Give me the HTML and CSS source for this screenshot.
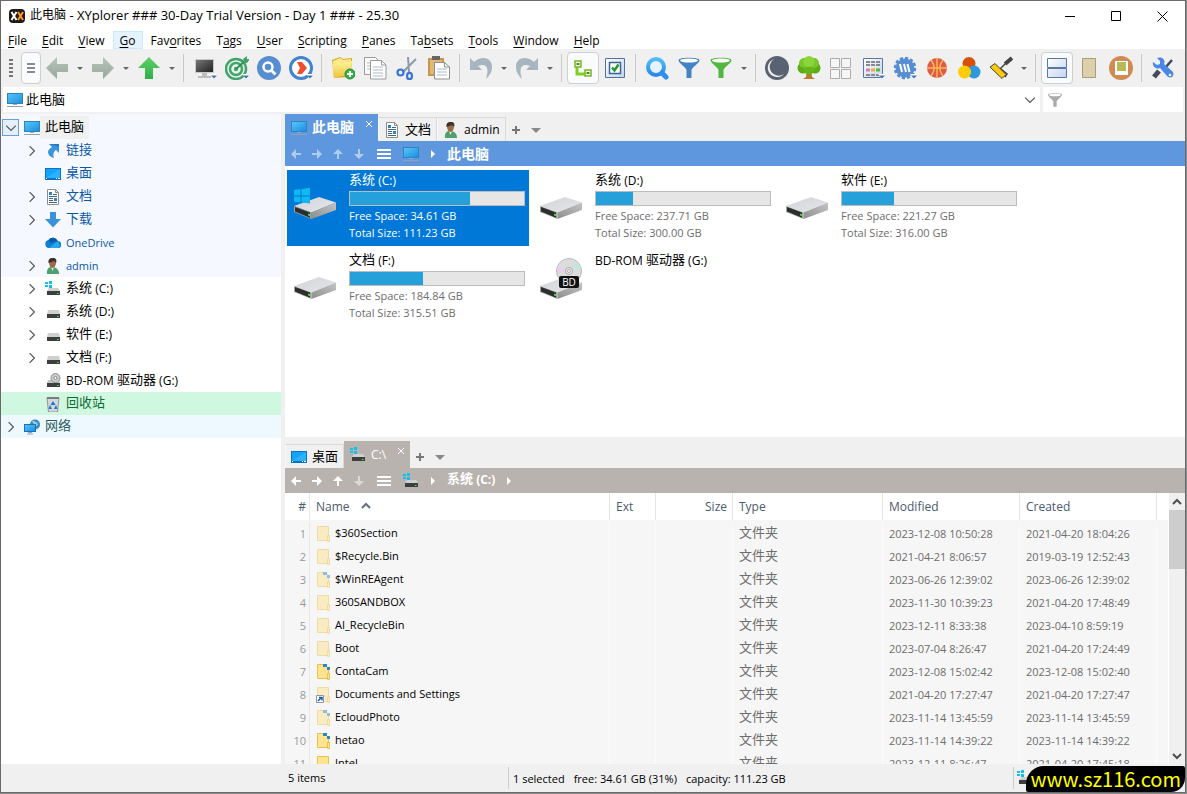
FILE: index.html
```html
<!DOCTYPE html>
<html lang="en">
<head>
    <meta charset="UTF-8">
    <meta name="viewport" content="width=device-width, initial-scale=1.0">
    <title>XYplorer</title>
    <link rel="stylesheet" href="styles.css">
</head>
<body>
    <!-- icon sprite -->
    <svg class="sprite" width="0" height="0" aria-hidden="true">
        <defs>
            <linearGradient id="gScreen" x1="0" y1="0" x2="1" y2="1"><stop offset="0" stop-color="#56c5f9"/><stop offset="1" stop-color="#1e8fe0"/></linearGradient>
            <linearGradient id="gGrayArrow" x1="0" y1="0" x2="0" y2="1"><stop offset="0" stop-color="#b9c4bb"/><stop offset="1" stop-color="#98a89c"/></linearGradient>
            <linearGradient id="gGreen" x1="0" y1="0" x2="0" y2="1"><stop offset="0" stop-color="#5fd06a"/><stop offset="1" stop-color="#2fae48"/></linearGradient>
            <linearGradient id="gDark" x1="0" y1="0" x2="1" y2="1"><stop offset="0" stop-color="#777"/><stop offset="1" stop-color="#222"/></linearGradient>
            <linearGradient id="gFolder" x1="0" y1="0" x2="0" y2="1"><stop offset="0" stop-color="#fff3a0"/><stop offset="1" stop-color="#eec43a"/></linearGradient>
            <linearGradient id="gPane" x1="0" y1="0" x2="1" y2="1"><stop offset="0" stop-color="#fff"/><stop offset="1" stop-color="#c3d3ef"/></linearGradient>
            <linearGradient id="gDriveTop" x1="0" y1="0" x2="1" y2="1"><stop offset="0" stop-color="#d2d3d6"/><stop offset="1" stop-color="#e6e7ea"/></linearGradient>
            <linearGradient id="gDriveSide" x1="0" y1="1" x2="1" y2="0"><stop offset="0" stop-color="#8e8e8e"/><stop offset="1" stop-color="#c4c4c6"/></linearGradient>
            <linearGradient id="gLens" x1="0" y1="0" x2="0" y2="1"><stop offset="0" stop-color="#51bdf8"/><stop offset="1" stop-color="#2b87ec"/></linearGradient>
        </defs>

        <symbol id="i-pc" viewBox="0 0 16 16">
            <path d="M0 1h16v11H0z" fill="#2c83bf"/><path d="M1 2h14v9H1z" fill="url(#gScreen)"/>
            <path d="M6 12h4v1H6z" fill="#9ab"/><path d="M0 14h16v1H0z" fill="#8fa3b5"/>
        </symbol>
        <symbol id="i-desktop" viewBox="0 0 16 16">
            <path d="M0 2h16v12H0z" fill="#0b72c4"/><path d="M1 3h14v9H1z" fill="#14a3fb"/><path d="M1 12l14-9v9z" fill="#2eb1ff"/>
            <path d="M1 12h1v1H1zM11 12h1v1h-1zM13 12h2v1h-2z" fill="#fff"/>
        </symbol>
        <symbol id="i-link" viewBox="0 0 16 16">
            <path d="M4 1h10v9l-3-3C8 9 8 12 9 15c-4-1-6-3-6-6 0-2 2-4 4-5z" fill="#3a95dd"/><path d="M4 1h10v3z" fill="#2579c6"/>
        </symbol>
        <symbol id="i-doc" viewBox="0 0 16 16">
            <path d="M2.500.5h8l3 3v12h-11z" fill="#fff" stroke="#8c8c8c"/><path d="M10.500.5v3h3" fill="none" stroke="#8c8c8c"/>
            <path d="M4 3h3v3H4zM9 9h3v3H9z" fill="#2f84c6"/><path d="M8 5.500h4M4 7.500h8M4 9.500h4M4 11.500h4M4 13.500h8" stroke="#48627b"/>
        </symbol>
        <symbol id="i-down" viewBox="0 0 16 16">
            <path d="M5 0h6v7h5l-8 8.500L0 7h5z" fill="#3a92dc"/>
        </symbol>
        <symbol id="i-cloud" viewBox="0 0 16 16">
            <path d="M4 13a4 4 0 0 1-.5-7.900A5.200 5.200 0 0 1 12.700 6a3.500 3.500 0 0 1 .3 7z" fill="#0f7fd6"/>
            <path d="M3.500 5.100A5.200 5.200 0 0 1 12.700 6L6 8z" fill="#0a5ca8"/><path d="M4 13l8-6.500a3.500 3.500 0 0 1 1 6.500z" fill="#28a8ea"/>
        </symbol>
        <symbol id="i-user" viewBox="0 0 16 16">
            <path d="M2 16c-.5-4 1-6.500 3.500-7h3c3.500 1 5.500 3 5.500 7z" fill="#4fa06f"/><path d="M6 9l1.500 4L9 9z" fill="#eee"/>
            <path d="M4 4c0-5 7-5 7 0 0 3-1.500 6-3.500 6S4 7 4 4z" fill="#9c6b48"/><path d="M3.500 5C3 0 6 0 8 0c3 0 4 2 3 5L9.500 3z" fill="#3b332c"/>
        </symbol>
        <symbol id="i-drive" viewBox="0 0 16 16">
            <path d="M3 6h11l1 4H2z" fill="#d0d0d0"/><path d="M2 10h13v4H2z" fill="#3c3f3e"/><path d="M12 12h1.500v1H12z" fill="#37ff4c"/>
        </symbol>
        <symbol id="i-cdrive" viewBox="0 0 16 16">
            <path d="M4 7h9l2 3H2z" fill="#d0d0d0"/><path d="M2 10h13v4H2z" fill="#3c3f3e"/><path d="M12 12h1.500v1H12z" fill="#37ff4c"/>
            <path d="M0 1h3v2H0zM4 0h3v3H4zM0 4h3v2H0zM4 4h3v3H4z" fill="#12c0f0"/>
        </symbol>
        <symbol id="i-bd" viewBox="0 0 16 16">
            <path d="M3 7h11l1 3H2z" fill="#c4c4c4"/><path d="M2 10h13v4H2z" fill="#3c3f3e"/><path d="M12 12h1.500v1H12z" fill="#37ff4c"/>
            <circle cx="10.500" cy="5" r="4.500" fill="#c9cbcd" stroke="#8d8f91"/><circle cx="10.500" cy="5" r="1.500" fill="#fff" stroke="#888"/>
        </symbol>
        <symbol id="i-bin" viewBox="0 0 16 16">
            <path d="M2 2l12-.5L12.500 16h-9z" fill="#d4d7da" stroke="#91979c"/><path d="M2 1h12v2H2z" fill="#777d83"/>
            <path d="M8 5l2.500 4h-5zM5 9l-1.500 4H7zM11 9l1.500 4H9z" fill="#1976c8"/>
        </symbol>
        <symbol id="i-net" viewBox="0 0 16 16">
            <circle cx="11" cy="5.500" r="5" fill="#3689c4"/><path d="M8 2c3-1 3 2 5 1l1 3-3 2z" fill="#9bc9e5"/>
            <path d="M0 5h12v8H0z" fill="#1773b5"/><path d="M1 6h10v6H1z" fill="url(#gScreen)"/><path d="M4 13h4v1H4zM3 14.500h6v1H3z" fill="#8fa3b5"/>
        </symbol>
        <symbol id="i-folder" viewBox="0 0 16 16">
            <path d="M1.500.5h11v14h-11z" fill="#ffe48f" stroke="#e8c14e"/><path d="M11.500 9.500h2v6h-2z" fill="#ffe48f" stroke="#e8c14e"/>
        </symbol>
        <symbol id="i-folder-tag" viewBox="0 0 16 16">
            <path d="M1.500.5h7l4 4v10h-11z" fill="#ffe48f" stroke="#e8c14e"/><path d="M11.500 9.500h2v6h-2z" fill="#ffe48f" stroke="#e8c14e"/>
            <path d="M7 0h4v3H7zM11 3h3v3h-3z" fill="#2a86cb"/>
        </symbol>

        <symbol id="i-hdd" viewBox="0 -8 48 56">
            <path d="M3 22L28 13l17 5.500L20.500 28.500z" fill="url(#gDriveTop)"/><path d="M45 18.500V26L20.500 35v-6.500z" fill="url(#gDriveSide)"/>
            <path d="M3 22l17.500 6.500V35L3 28z" fill="#a3a3a3"/><path d="M4 23l15 5.500v5.200L4 27.500z" fill="#2c2e2e"/><path d="M17 29.500l2 .7v2l-2-.7z" fill="#36e23f"/>
        </symbol>
        <symbol id="i-winlogo" viewBox="0 -8 48 56">
            <path d="M3 6l6.500-1v6.500H3zM10.500 4.900L19 3.700v7.800h-8.500zM3 12.500h6.500v6L3 17.500zM10.500 12.500H19v7l-8.500-1z" fill="#0fb8f0"/>
        </symbol>
        <symbol id="i-disc" viewBox="0 -8 48 56">
            <circle cx="32" cy="7" r="12.500" fill="#dadcde" stroke="#b9bbbd"/><path d="M32 7L21 2a12 12 0 0 0-1 6z" fill="#e9cfe9"/><path d="M32 7l9-8a12 12 0 0 1 3 5z" fill="#bfeadc"/>
            <circle cx="32" cy="7" r="3.500" fill="#eee" stroke="#aaa"/><circle cx="32" cy="7" r="1.500" fill="#fff" stroke="#aaa"/>
            <rect x="22" y="12" width="20" height="12" rx="2" fill="#111"/>
            <text x="32" y="21.500" text-anchor="middle" font-family="Open Sans" font-size="10" fill="#fff">BD</text>
        </symbol>

        <symbol id="t-left" viewBox="0 0 24 24"><path d="M1 12L12 1v7h11v8H12v7z" fill="url(#gGrayArrow)"/></symbol>
        <symbol id="t-right" viewBox="0 0 24 24"><path d="M23 12L12 1v7H1v8h11v7z" fill="url(#gGrayArrow)"/></symbol>
        <symbol id="t-up" viewBox="0 0 24 24"><path d="M12 1l11 11h-7v11H8V12H1z" fill="url(#gGreen)"/></symbol>
        <symbol id="t-drop" viewBox="0 0 24 24"><path d="M17 18h8l-4 5z" fill="#fff"/><path d="M18 19.500h6l-3 3z" fill="#4472b4"/></symbol>
        <symbol id="t-monitor" viewBox="0 0 24 24">
            <path d="M2 3h19v14H2z" fill="#c9c9c9"/><path d="M3 4h17v12H3z" fill="url(#gDark)"/><path d="M9 17h5v3H9zM5 20h13v2H5z" fill="#bdbdbd"/>
        </symbol>
        <symbol id="t-target" viewBox="0 0 24 24">
            <circle cx="11" cy="13" r="10" fill="#e9f7ee" stroke="#45a36b" stroke-width="2.500"/><circle cx="11" cy="13" r="6" fill="none" stroke="#45a36b" stroke-width="2.500"/><circle cx="11" cy="13" r="2.200" fill="#45a36b"/>
            <path d="M11 13l10-9" stroke="#2f9257" stroke-width="1.800"/><path d="M18 3l4-3v3h3l-3 4h-3z" fill="#45a36b"/>
        </symbol>
        <symbol id="t-search" viewBox="0 0 24 24">
            <circle cx="12" cy="12" r="12" fill="#578ed2"/><circle cx="11" cy="11" r="4.500" fill="none" stroke="#fff" stroke-width="2.500"/><path d="M14.500 14.500l4 4" stroke="#fff" stroke-width="3"/>
        </symbol>
        <symbol id="t-go" viewBox="0 0 24 24">
            <circle cx="12" cy="12" r="10.500" fill="#fff" stroke="#4282d0" stroke-width="3"/><path d="M8 6h5l5 6-5 6H8l3-6z" fill="#f04e2f"/>
        </symbol>
        <symbol id="t-newfolder" viewBox="0 0 24 24">
            <path d="M1 4l8-3 3 2 9-1v6l-3 13-15 1z" fill="#d9a928"/><path d="M2 5l7-3 3 2 8-1v2L2 8z" fill="#fbe98c"/><path d="M1 8l5-1 15-2-1 13-17 4z" fill="url(#gFolder)"/>
            <circle cx="19" cy="18" r="5" fill="#35b249" stroke="#218a35"/><path d="M19 15v6M16 18h6" stroke="#fff" stroke-width="2"/>
        </symbol>
        <symbol id="t-copy" viewBox="0 0 24 24">
            <path d="M1.500 1.500h11l4 4v13h-15z" fill="#fafafa" stroke="#9a9a9a"/><path d="M4 7h4M4 10h4M4 13h4" stroke="#b5bfca"/>
            <path d="M7.500 4.500h11l4.500 4.500v14H7.500z" fill="#fff" stroke="#9a9a9a"/><path d="M18.500 4.500V9H23" fill="none" stroke="#9a9a9a"/><path d="M10 11h10M10 14h10M10 17h10M10 20h10" stroke="#a9b9cb"/>
        </symbol>
        <symbol id="t-cut" viewBox="0 0 24 24">
            <path d="M13 1l1 15M21 3L8 16" stroke="#8d9aaa" stroke-width="2"/><circle cx="5.500" cy="16.500" r="3" fill="none" stroke="#3a74da" stroke-width="2.200"/><ellipse cx="14.500" cy="20" rx="2.500" ry="3.200" fill="none" stroke="#3a74da" stroke-width="2.200"/>
        </symbol>
        <symbol id="t-paste" viewBox="0 0 24 24">
            <path d="M1 2h16v18H1z" fill="#c8954b"/><path d="M3 4h12v14H3z" fill="#e0b878"/><path d="M5 0h8v4H5z" fill="#666"/>
            <path d="M7.500 6.500h10l5 4.500v12h-15z" fill="#fff" stroke="#8f8f8f"/><path d="M17.500 6.500V11h5" fill="none" stroke="#8f8f8f"/><path d="M10 13h10M10 16h10M10 19h10" stroke="#a9b9cb"/>
        </symbol>
        <symbol id="t-undo" viewBox="0 0 24 24"><path d="M1 2l4 4c6-6 18-6 18 5 0 6-4 10-6 12 2-6 3-14-4-14-2 0-3 1-4 1l4 4H1z" fill="#a8b4be"/></symbol>
        <symbol id="t-redo" viewBox="0 0 24 24"><path d="M23 2l-4 4C13 0 1 0 1 11c0 6 4 10 6 12-2-6-3-14 4-14 2 0 3 1 4 1l-4 4h12z" fill="#a8b4be"/></symbol>
        <symbol id="t-tree" viewBox="0 0 24 24">
            <path d="M6 9v9h9" fill="none" stroke="#7fd01b" stroke-width="3"/><path d="M4 5h6v6H4zM14 14h6v6h-6z" fill="#fff" stroke="#72b81f" stroke-width="1.500"/><path d="M5.500 8h3M15.500 17h3" stroke="#4f8b0e" stroke-width="2"/>
        </symbol>
        <symbol id="t-check" viewBox="0 0 24 24">
            <path d="M2.500 2.500h19v19h-19z" fill="url(#gPane)" stroke="#52739f"/><path d="M6.500 6.500h11v11h-11z" fill="#fff" stroke="#3e6392" stroke-width="1.500"/><path d="M9 11.500l2.500 3 4-6" fill="none" stroke="#229a24" stroke-width="2.500"/>
        </symbol>
        <symbol id="t-find" viewBox="0 0 24 24"><circle cx="11" cy="11" r="8" fill="#e6f3fc" stroke="url(#gLens)" stroke-width="4"/><path d="M17 17l4 4" stroke="#2f8df0" stroke-width="5" stroke-linecap="round"/></symbol>
        <symbol id="t-funnel" viewBox="0 0 24 24"><path d="M1.500 4c0-3 21-3 21 0 0 3-7 7-8 10v8h-5v-8C8.500 11 1.500 7 1.500 4z" fill="currentColor"/><ellipse cx="12" cy="4.500" rx="9" ry="2" fill="#fff"/></symbol>
        <symbol id="t-moon" viewBox="0 0 24 24"><circle cx="12" cy="12" r="12" fill="#586270"/><path d="M9 3A9.300 9.300 0 1 0 19 18A9.020 9.020 0 1 1 9 3z" fill="#eee"/></symbol>
        <symbol id="t-oak" viewBox="0 0 24 24">
            <path d="M10 13h4l1 8 3 2H6l3-2z" fill="#bb7a2b"/><circle cx="6" cy="12" r="5.500" fill="#5cab17"/><circle cx="18" cy="12" r="5.500" fill="#5cab17"/><circle cx="12" cy="13" r="5.500" fill="#64b41b"/><circle cx="7" cy="7" r="5" fill="#77c92a"/><circle cx="17" cy="7" r="5" fill="#77c92a"/><circle cx="12" cy="5.500" r="5.500" fill="#8ad63a"/>
        </symbol>
        <symbol id="t-grid" viewBox="0 0 24 24"><path d="M1.500 2.500h9v9h-9zM12.500 2.500h9v9h-9zM1.500 13.500h9v9h-9zM12.500 13.500h9v9h-9z" fill="#f6f6f6" stroke="#adadad"/></symbol>
        <symbol id="t-cal" viewBox="0 0 24 24">
            <path d="M2.500 2.500h19v19h-19z" fill="url(#gPane)" stroke="#5a78a4"/><path d="M5 6h14M5 9h14M5 19h14" stroke="#888" stroke-width="2" stroke-dasharray="4 1"/><path d="M5 12.500h4v3H5z" fill="#dc77c1"/><path d="M10 12.500h4v3h-4z" fill="#eeb229"/><path d="M15 12.500h4v3h-4z" fill="#57b547"/>
        </symbol>
        <symbol id="t-gear" viewBox="0 0 24 24"><circle cx="12" cy="12" r="9.500" fill="#578ed2"/><circle cx="12" cy="12" r="10" fill="none" stroke="#578ed2" stroke-width="2.500" stroke-dasharray="3.200 2"/><path d="M7 8l2 8M11 8l2 8M14.500 8l2 8" stroke="#fff" stroke-width="2"/></symbol>
        <symbol id="t-ball" viewBox="0 0 24 24"><circle cx="12" cy="12" r="10" fill="#dc5b4d"/><path d="M12 2v20M2 12h20M6 4c4 5 4 11 0 16M18 4c-4 5-4 11 0 16" fill="none" stroke="#fdb64f" stroke-width="1.500"/></symbol>
        <symbol id="t-colors" viewBox="0 0 24 24"><circle cx="12" cy="7.500" r="6.500" fill="#d94f06"/><circle cx="17" cy="16" r="6.500" fill="#2d99dc"/><circle cx="7.500" cy="16" r="6.500" fill="#ffcb05"/></symbol>
        <symbol id="t-paint" viewBox="0 0 24 24"><path d="M16 8l7-6" stroke="#444" stroke-width="4"/><path d="M11 13l5-5M12 13l6 5-2 3" fill="none" stroke="#444" stroke-width="1.500"/><path d="M1 11l5-3.500 11 11-4 4z" fill="#fbca0c" stroke="#444"/></symbol>
        <symbol id="t-panes" viewBox="0 0 24 24"><path d="M2.500 2.500h19v9h-19zM2.500 12.500h19v9h-19z" fill="url(#gPane)" stroke="#5a78a4"/></symbol>
        <symbol id="t-page" viewBox="0 0 24 24"><path d="M5.500 2.500h13v19h-13z" fill="#dccfab" stroke="#a99b78"/></symbol>
        <symbol id="t-orange" viewBox="0 0 24 24"><circle cx="12" cy="12" r="12" fill="#d18b52"/><path d="M6 5h13v14H6z" fill="#fff"/><path d="M8 6h9v9H8z" fill="#b8b956"/></symbol>
        <symbol id="t-tools" viewBox="0 0 24 24"><path d="M21 4l-7 8" stroke="#444b55" stroke-width="2.500"/><path d="M8 15l-5 6" stroke="#444b55" stroke-width="5"/><path d="M2 6l4 3 3-1 0-3-3-3c5-2 9 2 7 6l8 7c4 4-1 9-5 5l-7-8c-4 2-8-2-7-6z" fill="#4b87e6"/><circle cx="19" cy="19" r="1.300" fill="#fff"/></symbol>

        <symbol id="n-arrow" viewBox="0 0 10 10"><path d="M0 5l5-5v4h5v2H5v4z" fill="currentColor"/></symbol>
        <symbol id="n-menu" viewBox="0 0 14 10"><path d="M0 0h14v2H0zM0 4h14v2H0zM0 8h14v2H0z" fill="currentColor"/></symbol>
        <symbol id="n-chev" viewBox="0 0 10 10"><path d="M1 3l4 4 4-4" fill="none" stroke="currentColor"/></symbol>
        <symbol id="n-x" viewBox="0 0 8 8"><path d="M1 1l6 6M7 1L1 7" stroke="currentColor"/></symbol>
        <symbol id="n-plus" viewBox="0 0 8 8"><path d="M3 0h2v3h3v2H5v3H3V5H0V3h3z" fill="currentColor"/></symbol>
    </svg>

    <div class="window">
        <header class="titlebar">
            <svg class="logo" viewBox="0 0 16 16"><rect y="1" width="16" height="14" rx="4" fill="#1d1a17"/><path d="M2.500 4l5 8M7.500 4l-5 8" stroke="#fff" stroke-width="2"/><path d="M9 4l5 8M14 4l-5 8" stroke="#ff9a1f" stroke-width="2"/></svg>
            <h1><span lang="zh">此电脑</span> - XYplorer ### 30-Day Trial Version - Day 1 ### - 25.30</h1>
            <button class="win-btn" aria-label="Minimize"><svg viewBox="0 0 11 11"><path d="M0 5.500h10" stroke="#000"/></svg></button>
            <button class="win-btn" aria-label="Maximize"><svg viewBox="0 0 11 11"><path d="M.5.5h9v9h-9z" fill="none" stroke="#000"/></svg></button>
            <button class="win-btn" aria-label="Close"><svg viewBox="0 0 11 11"><path d="M.5.5l10 10M10.500.5l-10 10" stroke="#000"/></svg></button>
        </header>

        <nav class="menubar">
            <button><u>F</u>ile</button>
            <button><u>E</u>dit</button>
            <button><u>V</u>iew</button>
            <button class="hover"><u>G</u>o</button>
            <button>Fav<u>o</u>rites</button>
            <button>T<u>a</u>gs</button>
            <button><u>U</u>ser</button>
            <button><u>S</u>cripting</button>
            <button><u>P</u>anes</button>
            <button>Ta<u>b</u>sets</button>
            <button><u>T</u>ools</button>
            <button><u>W</u>indow</button>
            <button><u>H</u>elp</button>
        </nav>

        <div class="toolbar" id="toolbar">
            <span class="grip"></span>
            <button class="tool menu pressed" aria-label="Menu"><svg viewBox="0 0 8 10"><path d="M0 1h8M0 5h8M0 9h8" stroke="#666" stroke-width="1.500"/></svg></button>
        </div>

        <div class="addressbar">
            <div class="address">
                <svg class="ico"><use href="#i-pc"/></svg>
                <input type="text" value="此电脑" aria-label="Address" lang="zh">
                <button aria-label="Show list"><svg class="chev"><use href="#n-chev"/></svg></button>
            </div>
            <div class="filter">
                <svg class="ico"><use href="#t-funnel"/></svg>
                <input type="text" aria-label="Live filter">
            </div>
        </div>

        <main>
            <ul class="tree" id="tree"></ul>

            <div class="panes">
                <section class="pane pane-top">
                    <div class="tabs">
                        <button class="tab active"><svg class="ico"><use href="#i-pc"/></svg><span lang="zh">此电脑</span><svg class="close"><use href="#n-x"/></svg></button>
                        <button class="tab"><svg class="ico"><use href="#i-doc"/></svg><span lang="zh">文档</span></button>
                        <button class="tab"><svg class="ico"><use href="#i-user"/></svg><span>admin</span></button>
                        <button class="tab-extra" aria-label="New tab"><svg><use href="#n-plus"/></svg></button>
                        <button class="tab-extra" aria-label="Tab list"><i class="caret"></i></button>
                    </div>
                    <div class="crumbs">
                        <button class="off" aria-label="Back"><svg><use href="#n-arrow"/></svg></button>
                        <button class="off" aria-label="Forward"><svg class="r180"><use href="#n-arrow"/></svg></button>
                        <button class="off" aria-label="Up"><svg class="r90"><use href="#n-arrow"/></svg></button>
                        <button class="off" aria-label="Down"><svg class="r270"><use href="#n-arrow"/></svg></button>
                        <button class="burger" aria-label="Menu"><svg><use href="#n-menu"/></svg></button>
                        <svg class="ico"><use href="#i-pc"/></svg>
                        <i class="sep"></i>
                        <a href="#" lang="zh">此电脑</a>
                    </div>
                    <ul class="drives" id="drives"></ul>
                </section>

                <section class="pane pane-bottom">
                    <div class="tabs">
                        <button class="tab"><svg class="ico"><use href="#i-desktop"/></svg><span lang="zh">桌面</span></button>
                        <button class="tab active"><svg class="ico"><use href="#i-cdrive"/></svg><span>C:\</span><svg class="close"><use href="#n-x"/></svg></button>
                        <button class="tab-extra" aria-label="New tab"><svg><use href="#n-plus"/></svg></button>
                        <button class="tab-extra" aria-label="Tab list"><i class="caret"></i></button>
                    </div>
                    <div class="crumbs">
                        <button aria-label="Back"><svg><use href="#n-arrow"/></svg></button>
                        <button aria-label="Forward"><svg class="r180"><use href="#n-arrow"/></svg></button>
                        <button aria-label="Up"><svg class="r90"><use href="#n-arrow"/></svg></button>
                        <button class="off" aria-label="Down"><svg class="r270"><use href="#n-arrow"/></svg></button>
                        <button class="burger" aria-label="Menu"><svg><use href="#n-menu"/></svg></button>
                        <svg class="ico"><use href="#i-cdrive"/></svg>
                        <i class="sep"></i>
                        <a href="#"><span lang="zh">系统</span> (C:)</a>
                        <i class="sep"></i>
                    </div>
                    <div class="list">
                        <div class="list-view">
                            <table>
                                <colgroup><col class="c-num"><col><col class="c-ext"><col class="c-size"><col class="c-type"><col class="c-date"><col class="c-date"><col class="c-end"></colgroup>
                                <thead>
                                    <tr><th class="num">#</th><th>Name <svg class="sort" viewBox="0 0 10 10"><path d="M1 7l4-4 4 4" fill="none" stroke="#5c6f87" stroke-width="2"/></svg></th><th>Ext</th><th class="size">Size</th><th>Type</th><th>Modified</th><th>Created</th><th></th></tr>
                                </thead>
                                <tbody id="files"></tbody>
                            </table>
                        </div>
                        <div class="scrollbar">
                            <button aria-label="Scroll up"><svg class="r180" viewBox="0 0 10 10"><path d="M1 3l4 4 4-4" fill="none" stroke="#505050" stroke-width="2"/></svg></button>
                            <div class="thumb"></div>
                            <button aria-label="Scroll down"><svg viewBox="0 0 10 10"><path d="M1 3l4 4 4-4" fill="none" stroke="#505050" stroke-width="2"/></svg></button>
                        </div>
                    </div>
                </section>
            </div>
        </main>

        <footer class="statusbar">
            <span class="st-items">5 items</span>
            <span class="st-info"><span>1 selected</span><span>free: 34.61 GB (31%)</span><span>capacity: 111.23 GB</span></span>
            <span class="st-drive"><svg class="ico"><use href="#i-cdrive"/></svg></span>
            <a class="site" href="#">www.sz116.com</a>
        </footer>
    </div>

    <script>
        // '|' is a separator, '>' a drop-down caret, '*' a pressed button, '+' a small menu mark
        const tools = [
            't-left', '>', 't-right', '>', 't-up', '>', '|',
            't-monitor+', 't-target+', 't-search', 't-go+', '|',
            't-newfolder', 't-copy', 't-cut', 't-paste', '|',
            't-undo', '>', 't-redo', '>', '|',
            't-tree*', 't-check', '|',
            't-find', 't-funnel blue', 't-funnel green', '>', '|',
            't-moon', 't-oak', 't-grid', 't-cal+', 't-gear+', 't-ball', 't-colors', 't-paint', '>', '|',
            't-panes*', 't-page', 't-orange', '|',
            't-tools'
        ];

        document.getElementById('toolbar').insertAdjacentHTML('beforeend', tools.map(t => {
            if (t === '|') return '<span class="divider"></span>';
            if (t === '>') return '<button class="drop" aria-label="More"><i class="caret"></i></button>';
            const pressed = t.endsWith('*') ? ' pressed' : '';
            const mark = t.endsWith('+') ? '<use href="#t-drop"/>' : '';
            const [id, color = ''] = t.replace(/[*+]/, '').split(' ');
            return `<button class="tool ${color}${pressed}" aria-label="${id.slice(2)}"><svg viewBox="0 0 24 24"><use href="#${id}"/>${mark}</svg></button>`;
        }).join(''));

        function cjk(text) {
            return text.replace(/[\u4e00-\u9fff]+/g, '<span lang="zh">$&</span>');
        }

        // name, icon, expandable, row class
        const tree = [
            ['此电脑', 'pc', 'open', 'root home current'],
            ['链接', 'link', true, 'home'],
            ['桌面', 'desktop', false, 'home'],
            ['文档', 'doc', true, 'home'],
            ['下载', 'down', true, 'home'],
            ['OneDrive', 'cloud', false, 'home'],
            ['admin', 'user', true, 'home'],
            ['系统 (C:)', 'cdrive', true, ''],
            ['系统 (D:)', 'drive', true, ''],
            ['软件 (E:)', 'drive', true, ''],
            ['文档 (F:)', 'drive', true, ''],
            ['BD-ROM 驱动器 (G:)', 'bd', false, ''],
            ['回收站', 'bin', false, 'bin'],
            ['网络', 'net', true, 'root net']
        ];

        document.getElementById('tree').innerHTML = tree.map(([name, icon, exp, cls]) => `
            <li class="${cls}">
                ${exp ? `<button class="${exp === 'open' ? 'open' : ''}" aria-label="Expand ${name}"><svg class="chev"><use href="#n-chev"/></svg></button>` : '<i class="noexp"></i>'}
                <svg class="ico"><use href="#i-${icon}"/></svg><span class="label">${cjk(name)}</span>
            </li>`).join('');

        // name, used %, free, total
        const drives = [
            ['系统 (C:)', 69, '34.61', '111.23'],
            ['系统 (D:)', 21, '237.71', '300.00'],
            ['软件 (E:)', 30, '221.27', '316.00'],
            ['文档 (F:)', 42, '184.84', '315.51'],
            ['BD-ROM 驱动器 (G:)']
        ];

        document.getElementById('drives').innerHTML = drives.map(([name, used, free, total], i) => `
            <li class="${i === 0 ? 'selected' : ''}">
                <svg class="hdd" viewBox="0 0 48 56"><use href="#i-hdd"/>${i === 0 ? '<use href="#i-winlogo"/>' : ''}${used ? '' : '<use href="#i-disc"/>'}</svg>
                <div class="info">
                    <h3>${cjk(name)}</h3>
                    ${used ? `<div class="bar"><div style="width: ${used}%"></div></div><p>Free Space: ${free} GB</p><p>Total Size: ${total} GB</p>` : ''}
                </div>
            </li>`).join('');

        // name, icon class, modified, created
        const files = [
            ['$360Section', 'dim', '2023-12-08 10:50:28', '2021-04-20 18:04:26'],
            ['$Recycle.Bin', 'dim', '2021-04-21 8:06:57', '2019-03-19 12:52:43'],
            ['$WinREAgent', 'dim tag', '2023-06-26 12:39:02', '2023-06-26 12:39:02'],
            ['360SANDBOX', 'dim', '2023-11-30 10:39:23', '2021-04-20 17:48:49'],
            ['AI_RecycleBin', 'dim', '2023-12-11 8:33:38', '2023-04-10 8:59:19'],
            ['Boot', 'dim', '2023-07-04 8:26:47', '2021-04-20 17:24:49'],
            ['ContaCam', 'tag', '2023-12-08 15:02:42', '2023-12-08 15:02:40'],
            ['Documents and Settings', 'dim shortcut', '2021-04-20 17:27:47', '2021-04-20 17:27:47'],
            ['EcloudPhoto', 'dim tag', '2023-11-14 13:45:59', '2023-11-14 13:45:59'],
            ['hetao', 'tag', '2023-11-14 14:39:22', '2023-11-14 14:39:22'],
            ['Intel', '', '2023-12-11 8:26:47', '2021-04-20 17:45:18']
        ];

        document.getElementById('files').innerHTML = files.map(([name, cls, modified, created], i) => `
            <tr>
                <td class="num">${i + 1}</td>
                <td class="name"><svg class="ico" viewBox="0 0 16 16"><g class="${cls}"><use href="#i-folder${cls.includes('tag') ? '-tag' : ''}"/></g>${cls.includes('shortcut') ? '<path d="M.5 8.500h7v7h-7z" fill="#fff" stroke="#8a97a8"/><path d="M2 14l3-3M3 10.500h3v3" fill="none" stroke="#1f5fae" stroke-width="1.500"/>' : ''}</svg>${name}</td>
                <td></td><td></td><td><span lang="zh">文件夹</span></td><td>${modified}</td><td>${created}</td><td></td>
            </tr>`).join('');
    </script>
</body>
</html>
```

FILE: styles.css
```css
* {
    box-sizing: border-box;
}
body {
    margin: 0;
    background: #8d8d8d;
    font-family: "Open Sans", "Noto Sans CJK SC", sans-serif;
    font-size: 11px;
    color: #000;
}
:lang(zh) {
    font-size: 13px;
}
span:lang(zh) {
    line-height: 1;
    vertical-align: 1px;
}
h1, h3, p, ul {
    margin: 0;
    padding: 0;
    font-weight: normal;
    list-style: none;
}
button {
    border: 0;
    padding: 0;
    background: none;
    font: inherit;
    color: inherit;
    display: flex;
    align-items: center;
    justify-content: center;
    flex-shrink: 0;
}
input {
    border: 0;
    padding: 0 0 2px;
    outline: 0;
    min-width: 0;
    flex: 1;
    background: none;
    font-family: inherit;
}
svg {
    display: block;
    flex-shrink: 0;
}
.sprite {
    position: absolute;
}
.ico {
    width: 16px;
    height: 16px;
}
.chev {
    width: 12px;
    height: 12px;
    color: #555;
}
.caret {
    border: 3px solid transparent;
    border-top-color: #666;
    border-bottom: 0;
}
.r90 { transform: rotate(90deg); }
.r180 { transform: rotate(180deg); }
.r270 { transform: rotate(270deg); }

.window {
    height: calc(100vh - 1px);
    margin-right: 1px;
    border: 1px solid #6a6a6a;
    background: #f0f0f0;
    display: flex;
    flex-direction: column;
    overflow: hidden;
}

/* title and menu */
.titlebar {
    height: 30px;
    background: #fff;
    display: flex;
    align-items: center;
    padding-left: 8px;
}
.logo {
    width: 16px;
    height: 16px;
}
.titlebar h1 {
    flex: 1;
    padding: 0 0 2px 5px;
    font-size: 13px;
    white-space: nowrap;
}
.titlebar h1 span {
    font-size: 12px;
}
.win-btn {
    width: 46px;
    height: 30px;
}
.win-btn svg {
    width: 11px;
    height: 11px;
}
.menubar {
    height: 18px;
    background: #fff;
    display: flex;
    gap: 1px;
    font-size: 12px;
}
.menubar button {
    height: 18px;
    padding: 0 7px;
    display: block;
    line-height: 20px;
}
.menubar u {
    text-underline-offset: 2px;
}
.menubar .hover {
    background: #e5f3ff;
    box-shadow: inset 0 0 0 1px #cce8ff;
}

/* toolbar */
.toolbar {
    height: 38px;
    display: flex;
    align-items: center;
}
.grip {
    width: 4px;
    height: 19px;
    margin: 0 8px;
    background: repeating-linear-gradient(#777 0 2px, transparent 2px 4px);
}
.tool {
    width: 32px;
    height: 32px;
}
.tool svg {
    width: 24px;
    height: 24px;
    overflow: visible;
}
.tool.menu {
    width: 20px;
}
.tool.menu svg {
    width: 8px;
    height: 10px;
}
.pressed {
    border: 1px solid #cdd0cb;
    border-radius: 4px;
    background: #f9fbfe;
}
.blue { color: #4283c6; }
.green { color: #4fb83f; }
.drop {
    width: 14px;
    height: 32px;
}
.divider {
    width: 10px;
    height: 28px;
    border-left: 1px solid #c9c9c9;
    margin-left: 4px;
    margin-right: -4px;
}

/* address */
.addressbar {
    height: 25px;
    display: flex;
    gap: 3px;
    margin-bottom: 2px;
    padding: 0 2px;
}
.address, .filter {
    display: flex;
    align-items: center;
    background: #fff;
}
.address {
    flex: 1;
    padding-left: 4px;
    gap: 3px;
}
.address button {
    width: 20px;
    height: 25px;
}
.filter {
    width: 140px;
    padding-left: 4px;
    color: #aaa;
}

/* tree */
main {
    flex: 1;
    min-height: 0;
    display: flex;
    gap: 4px;
}
.tree {
    width: 280px;
    background: linear-gradient(#f5f9ff 2px, #fff 2px);
    padding-top: 2px;
}
.tree li {
    height: 23px;
    display: flex;
    align-items: center;
    padding-left: 22px;
}
.tree .root {
    padding-left: 1px;
}
.tree li > button, .noexp {
    width: 17px;
    height: 17px;
    margin-right: 5px;
}
.tree li > button .chev {
    transform: rotate(-90deg);
}
.tree li > .open {
    border: 1px solid #6a9fdc;
    background: #e4effb;
}
.tree li > .open .chev {
    transform: none;
}
.label {
    height: 23px;
    line-height: 23px;
    padding: 0 5px;
    font-size: 12px;
    white-space: nowrap;
}
.home { background: #f5f9ff; color: #0a57a8; }
.home .label { font-size: 11px; }
.tree .current .label { background: #f0f0f0; color: #000; }
.tree .bin { background: #d0f7e0; color: #0e6b33; }
.tree .net { background: #edf9ff; color: #2a5c5c; }

/* panes */
.panes {
    flex: 1;
    min-width: 0;
    display: flex;
    flex-direction: column;
    gap: 4px;
}
.pane {
    display: flex;
    flex-direction: column;
    min-height: 0;
}
.pane-top {
    flex: 1;
    --accent: #5e97dd;
}
.pane-bottom {
    flex: 1;
    --accent: #b9b3b0;
}
.tabs {
    height: 27px;
    display: flex;
    align-items: flex-end;
}
.tab {
    height: 24px;
    padding: 0 5px;
    border: 1px solid #d9d9d9;
    border-left-color: #f8f8f8;
    border-bottom: 0;
    gap: 5px;
    font-size: 12px;
    position: relative;
}
.tab.active {
    height: 27px;
    padding: 0 24px 0 6px;
    border: 0;
    background: var(--accent);
    color: #fff;
}
.tab span:lang(zh) {
    padding-bottom: 1px;
}
.pane-top .tab.active span {
    font-weight: bold;
    font-size: 14px;
}
.close {
    position: absolute;
    right: 5px;
    top: 6px;
    width: 8px;
    height: 8px;
}
.tab-extra {
    width: 20px;
    height: 22px;
    color: #777;
}
.tab-extra svg {
    width: 8px;
    height: 8px;
}
.tab-extra .caret {
    border-width: 5px;
    border-bottom: 0;
    border-top-color: #888;
}
.crumbs {
    height: 25px;
    background: var(--accent);
    color: #fff;
    display: flex;
    align-items: center;
}
.crumbs button {
    width: 21px;
    height: 25px;
}
.crumbs button svg {
    width: 10px;
    height: 10px;
}
.crumbs .off {
    opacity: 0.5;
}
.crumbs .burger {
    width: 30px;
    margin-right: 4px;
}
.crumbs .burger svg {
    width: 14px;
}
.crumbs .sep {
    border: 4px solid transparent;
    border-left-color: #fff;
    border-right: 0;
    margin: 0 12px;
}
.crumbs a {
    padding-bottom: 2px;
    color: #fff;
    font-size: 12px;
    font-weight: bold;
    text-decoration: none;
}
.crumbs a:lang(zh) {
    font-size: 14px;
}

/* drives */
.drives {
    flex: 1;
    background: #fff;
    padding: 4px 2px;
    display: grid;
    grid-template-columns: repeat(auto-fill, 242px);
    grid-auto-rows: 76px;
    gap: 4px;
}
.drives li {
    display: flex;
    gap: 10px;
    padding: 1px 4px;
}
.hdd {
    width: 48px;
    height: 56px;
    margin-top: 5px;
}
.info {
    flex: 1;
}
.info h3 {
    height: 20px;
    line-height: 20px;
    font-size: 12px;
}
.info p {
    line-height: 17px;
    color: #6d6d6d;
}
.bar {
    height: 15px;
    margin-bottom: 1px;
    border: 1px solid #bcbcbc;
    background: #e6e6e6;
}
.bar div {
    height: 100%;
    background: #26a0da;
}
.drives .selected {
    background: #0078d7;
}
.selected h3, .selected p {
    color: #fff;
}

/* file list */
.list {
    flex: 1;
    min-height: 0;
    display: flex;
}
.list-view {
    flex: 1;
    overflow: hidden;
    background: #f6f6f6;
}
table {
    width: 100%;
    table-layout: fixed;
    border-collapse: separate;
    border-spacing: 0;
}
.c-num { width: 25px; }
.c-ext { width: 46px; }
.c-size { width: 77px; }
.c-type { width: 150px; }
.c-date { width: 137px; }
.c-end { width: 11px; }
th {
    height: 27px;
    padding: 0 6px;
    background: #fff;
    border-right: 1px solid #e5e5e5;
    font-size: 12px;
    font-weight: normal;
    text-align: left;
    color: #4c5a6e;
}
th:last-child, td:last-child {
    border-right: 0;
    padding: 0;
}
th .sort {
    display: inline-block;
    width: 10px;
    height: 10px;
    margin-left: 8px;
}
th.size {
    text-align: right;
    padding-right: 5px;
}
tbody::before {
    content: "";
    display: block;
    height: 2px;
}
td {
    height: 23px;
    padding: 0 6px;
    border-right: 1px solid #fafbff;
    color: #6d6d6d;
    white-space: nowrap;
    line-height: 19px;
}
.num {
    padding: 0 3px 0 0;
    border-right-color: #e8e8e8;
    text-align: right;
}
td.num {
    color: #999;
}
td.name {
    color: #000;
}
td .ico {
    display: inline-block;
    vertical-align: middle;
    margin: 0 3px 2px 0;
}
.dim {
    opacity: 0.5;
}
.scrollbar {
    width: 17px;
    display: flex;
    flex-direction: column;
    background: #f0f0f0;
    border-left: 1px solid #fff;
}
.scrollbar button {
    height: 17px;
}
.scrollbar svg {
    width: 10px;
    height: 10px;
}
.thumb {
    height: 59px;
    margin-bottom: auto;
    background: #cdcdcd;
}

/* status */
.statusbar {
    height: 28px;
    display: flex;
    align-items: center;
    position: relative;
    white-space: nowrap;
}
.st-items {
    width: 508px;
    padding-left: 287px;
    border-right: 1px solid #ccc;
    line-height: 22px;
}
.st-info {
    flex: 1;
    display: flex;
    gap: 9px;
    padding-left: 4px;
}
.st-drive {
    width: 172px;
    padding: 3px;
    border-left: 1px solid #ccc;
}
.site {
    position: absolute;
    right: 0;
    bottom: 0;
    height: 26px;
    padding: 0 4px;
    background: #000;
    border-radius: 18px 2px 14px 2px;
    color: #ff0;
    font-family: "Noto Sans CJK SC", sans-serif;
    font-size: 20px;
    line-height: 26px;
    text-decoration: none;
}
```
